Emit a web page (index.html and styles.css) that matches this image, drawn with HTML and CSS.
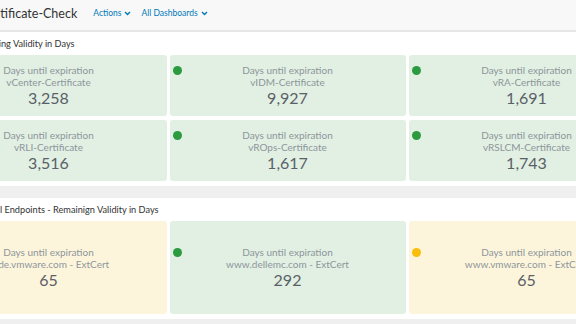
FILE: index.html
```html
<!DOCTYPE html>
<html lang="en">
<head>
    <meta charset="UTF-8">
    <meta name="viewport" content="width=device-width, initial-scale=1.0">
    <title>Certificate-Check</title>
    <link rel="stylesheet" href="styles.css">
</head>
<body>

<div class="page">
    <div class="topbar">
        <h1>Certificate-Check</h1>
        <a class="menu">Actions
            <svg width="7" height="5" viewBox="0 0 7 5"><polyline points="1,1 3.5,3.5 6,1" /></svg>
        </a>
        <a class="menu">All Dashboards
            <svg width="7" height="5" viewBox="0 0 7 5"><polyline points="1,1 3.5,3.5 6,1" /></svg>
        </a>
    </div>

    <div class="panel">
        <div class="panel-title">Remaining Validity in Days</div>
        <div class="tiles small">
            <div class="tile ok">
                <span class="dot"></span>
                <span class="label">Days until expiration</span>
                <span class="label">vCenter-Certificate</span>
                <span class="value">3,258</span>
            </div>
            <div class="tile ok">
                <span class="dot green"></span>
                <span class="label">Days until expiration</span>
                <span class="label">vIDM-Certificate</span>
                <span class="value">9,927</span>
            </div>
            <div class="tile ok">
                <span class="dot green"></span>
                <span class="label">Days until expiration</span>
                <span class="label">vRA-Certificate</span>
                <span class="value">1,691</span>
            </div>
            <div class="tile ok">
                <span class="dot"></span>
                <span class="label">Days until expiration</span>
                <span class="label">vRLI-Certificate</span>
                <span class="value">3,516</span>
            </div>
            <div class="tile ok">
                <span class="dot green"></span>
                <span class="label">Days until expiration</span>
                <span class="label">vROps-Certificate</span>
                <span class="value">1,617</span>
            </div>
            <div class="tile ok">
                <span class="dot green"></span>
                <span class="label">Days until expiration</span>
                <span class="label">vRSLCM-Certificate</span>
                <span class="value">1,743</span>
            </div>
        </div>
    </div>

    <div class="panel">
        <div class="panel-title">External Endpoints - Remainign Validity in Days</div>
        <div class="tiles big">
            <div class="tile warn">
                <span class="dot"></span>
                <span class="label">Days until expiration</span>
                <span class="label">code.vmware.com - ExtCert</span>
                <span class="value">65</span>
            </div>
            <div class="tile ok">
                <span class="dot green"></span>
                <span class="label">Days until expiration</span>
                <span class="label">www.dellemc.com - ExtCert</span>
                <span class="value">292</span>
            </div>
            <div class="tile warn">
                <span class="dot yellow"></span>
                <span class="label">Days until expiration</span>
                <span class="label">www.vmware.com - ExtCert</span>
                <span class="value">65</span>
            </div>
        </div>
    </div>
</div>

</body>
</html>
```

FILE: styles.css
```css
body {
    margin: 0;
    background: #efefef;
    font-family: Lato, "Open Sans", sans-serif;
    overflow: hidden;
}

.page {
    margin-left: -78px;
    width: 730px;
}

.topbar {
    display: flex;
    align-items: center;
    height: 26px;
    padding: 0 0 4px 59px;
    background: #f8f8f8;
    border-bottom: 2px solid #e6e6e6;
}

.topbar h1 {
    margin: 0 16px 0 0;
    font-size: 12.5px;
    font-weight: normal;
    color: #333;
}

.menu {
    display: flex;
    align-items: center;
    gap: 3px;
    margin-right: 10px;
    font-size: 8.5px;
    color: #0079b8;
}

.menu svg polyline {
    fill: none;
    stroke: #0079b8;
    stroke-width: 1.4;
}

.panel {
    background: #fff;
    padding: 0 8px 5px 8px;
    margin-bottom: 12px;
}

.panel-title {
    height: 23px;
    line-height: 23px;
    padding-left: 39px;
    font-size: 9.2px;
    color: #333;
    white-space: nowrap;
}

.tiles {
    display: grid;
    grid-template-columns: repeat(3, 236px);
    column-gap: 3px;
    row-gap: 4px;
    margin-left: 0.5px;
}

.tiles.small .tile {
    height: 61px;
}

.tiles.big .tile {
    height: 93px;
}

.tile {
    position: relative;
    display: flex;
    flex-direction: column;
    justify-content: center;
    align-items: center;
    border-radius: 3px;
    white-space: nowrap;
}

.tile.ok {
    background: #e1f0e3;
}

.tile.warn {
    background: #fdf5db;
}

.dot {
    position: absolute;
    left: 3px;
    top: 50%;
    margin-top: -20px;
    width: 9px;
    height: 9px;
    border-radius: 50%;
}

.dot.green {
    background: #2c9a3f;
}

.dot.yellow {
    background: #fbbd0d;
}

.label {
    font-size: 10px;
    line-height: 12px;
    color: #8e959b;
}

.value {
    font-size: 16px;
    line-height: 19px;
    color: #5a6067;
}
```
